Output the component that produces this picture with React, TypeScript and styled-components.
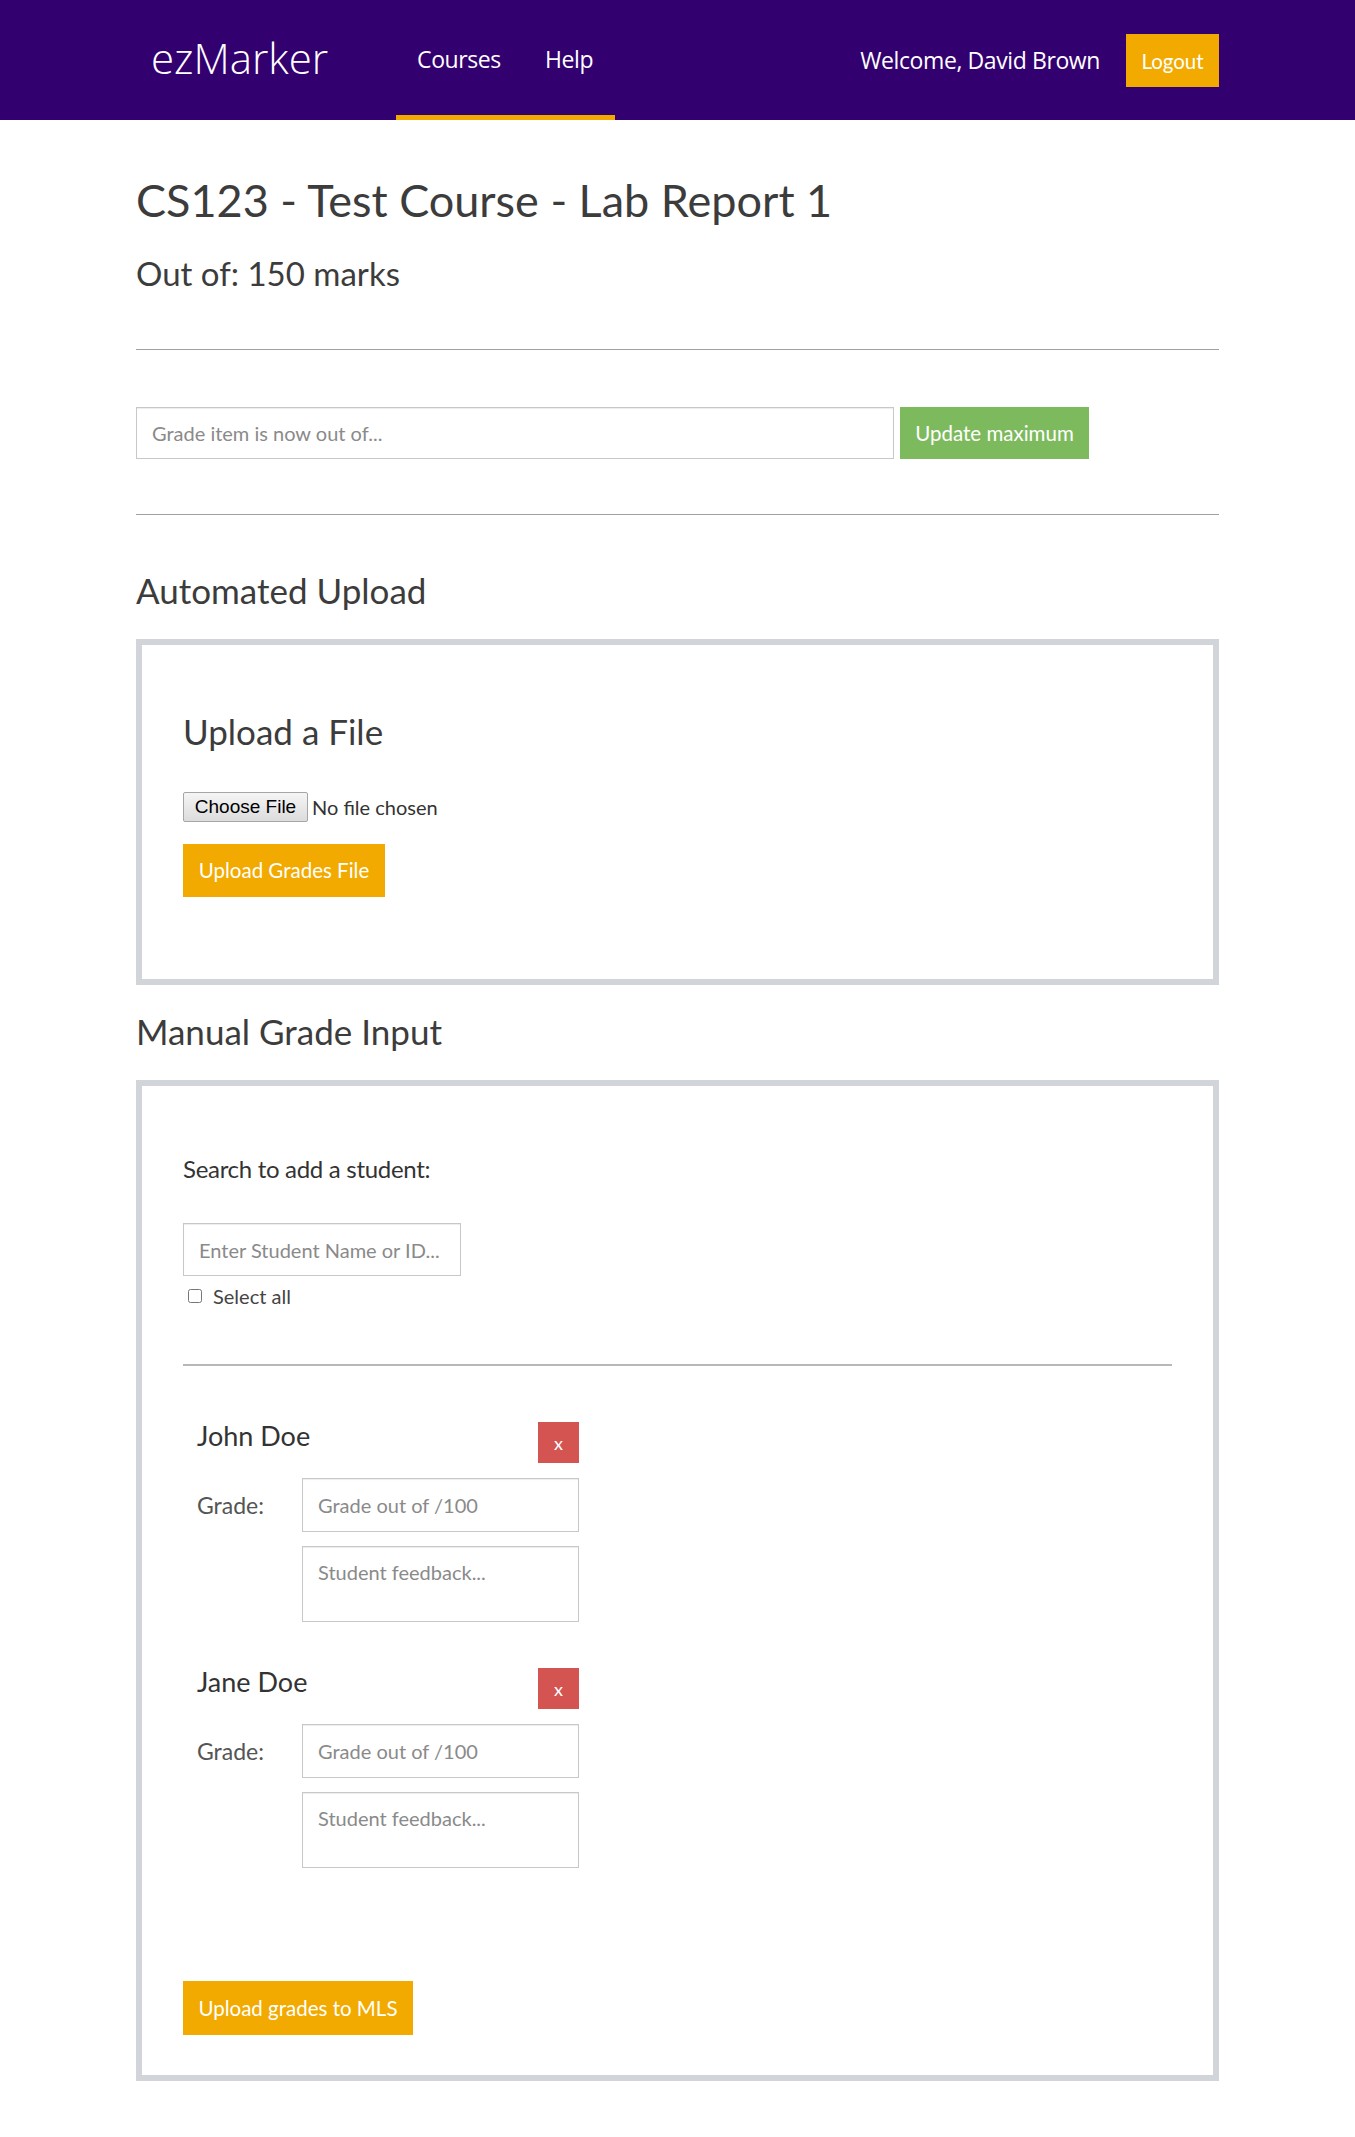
import React from "react";
import styled, { createGlobalStyle } from "styled-components";

const GlobalStyle = createGlobalStyle`
  html, body { margin: 0; padding: 0; background: #ffffff; }
  body {
    font-family: Lato, "Open Sans", Arial, sans-serif;
    color: #3f3f3f;
    font-size: 18px;
  }
  * { box-sizing: border-box; }
`;

const NavBar = styled.nav`
  background: #330070;
  height: 120px;
`;

const NavInner = styled.div`
  max-width: 1083px;
  height: 100%;
  margin: 0 auto;
  display: flex;
  align-items: stretch;
`;

const Brand = styled.a`
  display: flex;
  align-items: center;
  padding: 0 0 6px 15px;
  font-family: "Open Sans", Lato, sans-serif;
  font-weight: 300;
  font-size: 42px;
  color: #ffffff;
  text-decoration: none;
  margin-right: 68px;
`;

const NavList = styled.ul`
  list-style: none;
  margin: 0;
  padding: 2px 22px 0 21px;
  display: flex;
  align-items: center;
  gap: 44px;
  border-bottom: 5px solid #f2aa00;
`;

const NavItem = styled.li`
  font-family: "Open Sans", Lato, sans-serif;
  font-size: 23px;
  color: #ffffff;
  letter-spacing: -0.4px;
`;

const NavRight = styled.div`
  margin-left: auto;
  display: flex;
  align-items: center;
  gap: 26px;
`;

const Welcome = styled.span`
  font-family: "Open Sans", Lato, sans-serif;
  font-size: 23px;
  letter-spacing: -0.4px;
  color: #ffffff;
  margin-bottom: 1px;
`;

const Button = styled.button<{ $tone: "orange" | "green" | "red" }>`
  border: none;
  border-radius: 0;
  font-family: Lato, sans-serif;
  font-size: 20.5px;
  color: #ffffff;
  cursor: pointer;
  padding: 0 16px;
  background: ${(p) =>
    p.$tone === "orange" ? "#f2aa00" : p.$tone === "green" ? "#7dba5d" : "#d35450"};
`;

const LogoutButton = styled(Button)`
  width: 93px;
  height: 53px;
  padding: 0;
  margin-top: 1px;
`;

const Main = styled.main`
  max-width: 1083px;
  margin: 0 auto;
  padding: 53px 0 54px;
`;

const Title = styled.h1`
  margin: 0;
  font-size: 45px;
  font-weight: 400;
  line-height: 1.2;
  color: #3c3c3c;
`;

const SubTitle = styled.h3`
  margin: 27px 0 0;
  font-size: 33px;
  font-weight: 400;
  line-height: 1.2;
  color: #3c3c3c;
`;

const Rule = styled.hr<{ $top: number }>`
  margin: ${(p) => p.$top}px 0 0;
  border: none;
  border-top: 1px solid #a0a0a0;
  height: 0;
`;

const MaxRow = styled.div`
  margin-top: 57px;
  display: flex;
  gap: 6px;
  height: 52px;
`;

const TextInput = styled.input`
  height: 52px;
  border: 1px solid #c8c8c8;
  border-radius: 0;
  box-shadow: inset 0 1px 1px rgba(0, 0, 0, 0.075);
  padding: 0 15px;
  font-family: Lato, sans-serif;
  font-size: 20px;
  color: #333;
  outline: none;
  &::placeholder { color: #8a8a8a; }
`;

const MaxInput = styled(TextInput)`
  width: 758px;
  height: 52px;
`;

const UpdateButton = styled(Button)`
  width: 189px;
  height: 52px;
  padding: 0;
`;

const SectionTitle = styled.h2<{ $top: number }>`
  margin: ${(p) => p.$top}px 0 0;
  font-size: 35px;
  font-weight: 400;
  line-height: 1.2;
  color: #3c3c3c;
`;

const Panel = styled.section<{ $pt: number; $pb: number }>`
  margin-top: 28px;
  border: 6px solid #d1d5da;
  padding: ${(p) => p.$pt}px 41px ${(p) => p.$pb}px;
  display: flex;
  flex-direction: column;
  align-items: flex-start;
`;

const PanelTitle = styled.h3`
  margin: 0;
  font-size: 35px;
  font-weight: 400;
  line-height: 1.2;
  color: #3c3c3c;
`;

const FileRow = styled.div`
  margin-top: 40px;
  display: flex;
  align-items: center;
  gap: 4px;
`;

const ChooseButton = styled.button`
  height: 30px;
  width: 125px;
  padding: 0;
  border: 1px solid #a6a6a6;
  border-radius: 2px;
  background: linear-gradient(#f5f5f5, #dcdcdc);
  font-family: "Liberation Sans", Arial, sans-serif;
  font-size: 19px;
  color: #000;
`;

const FileStatus = styled.span`
  font-size: 20px;
  color: #333;
`;

const UploadFileButton = styled(Button)`
  margin-top: 22px;
  width: 202px;
  height: 53px;
  padding: 0;
`;

const SearchLabel = styled.p`
  margin: 0;
  font-size: 24px;
  line-height: 1.2;
  color: #333;
  letter-spacing: -0.3px;
`;

const SearchInput = styled(TextInput)`
  margin-top: 40px;
  width: 278px;
  height: 53px;
  padding-left: 15px;
`;

const CheckRow = styled.label`
  margin-top: 8px;
  margin-left: 5px;
  display: flex;
  align-items: center;
  gap: 11px;
  font-size: 20px;
  color: #444;
`;

const Check = styled.input`
  margin: 0;
  width: 14px;
  height: 14px;
`;

const InnerRule = styled.hr`
  align-self: stretch;
  margin: 56px 0 0;
  border: none;
  border-top: 2px solid #b8b8b8;
  height: 0;
`;

const StudentList = styled.div`
  margin-top: 56px;
  margin-left: 14px;
  display: flex;
  flex-direction: column;
  gap: 46px;
`;

const StudentCard = styled.div`
  width: 382px;
  display: flex;
  flex-direction: column;
`;

const StudentHeader = styled.div`
  display: flex;
  justify-content: space-between;
  align-items: flex-start;
`;

const StudentName = styled.h4`
  margin: -2px 0 0;
  font-size: 27px;
  font-weight: 400;
  line-height: 1.2;
  color: #333;
`;

const RemoveButton = styled(Button)`
  width: 41px;
  height: 41px;
  padding: 0;
  font-size: 18px;
`;

const GradeRow = styled.div`
  margin-top: 15px;
  display: flex;
  align-items: center;
  justify-content: space-between;
`;

const GradeLabel = styled.label`
  font-size: 23px;
  color: #555;
`;

const GradeInput = styled(TextInput)`
  width: 277px;
  height: 54px;
`;

const Feedback = styled.textarea`
  margin-top: 14px;
  margin-left: auto;
  width: 277px;
  height: 76px;
  border: 1px solid #c8c8c8;
  border-radius: 0;
  box-shadow: inset 0 1px 1px rgba(0, 0, 0, 0.075);
  padding: 13px 15px;
  font-family: Lato, sans-serif;
  font-size: 20px;
  resize: none;
  outline: none;
  &::placeholder { color: #8a8a8a; }
`;

const MlsButton = styled(Button)`
  margin-top: 113px;
  width: 230px;
  height: 54px;
  padding: 0;
`;

const students = ["John Doe", "Jane Doe"];

export default function App() {
  return (
    <>
      <GlobalStyle />
      <NavBar>
        <NavInner>
          <Brand href="#">ezMarker</Brand>
          <NavList>
            <NavItem>Courses</NavItem>
            <NavItem>Help</NavItem>
          </NavList>
          <NavRight>
            <Welcome>Welcome, David Brown</Welcome>
            <LogoutButton $tone="orange">Logout</LogoutButton>
          </NavRight>
        </NavInner>
      </NavBar>
      <Main>
        <Title>CS123 - Test Course - Lab Report 1</Title>
        <SubTitle>Out of: 150 marks</SubTitle>
        <Rule $top={55} />
        <MaxRow>
          <MaxInput placeholder="Grade item is now out of..." />
          <UpdateButton $tone="green">Update maximum</UpdateButton>
        </MaxRow>
        <Rule $top={55} />
        <SectionTitle $top={54}>Automated Upload</SectionTitle>
        <Panel $pt={65} $pb={82}>
          <PanelTitle>Upload a File</PanelTitle>
          <FileRow>
            <ChooseButton type="button">Choose File</ChooseButton>
            <FileStatus>No file chosen</FileStatus>
          </FileRow>
          <UploadFileButton $tone="orange">Upload Grades File</UploadFileButton>
        </Panel>
        <SectionTitle $top={25}>Manual Grade Input</SectionTitle>
        <Panel $pt={69} $pb={40}>
          <SearchLabel>Search to add a student:</SearchLabel>
          <SearchInput placeholder="Enter Student Name or ID..." />
          <CheckRow>
            <Check type="checkbox" />
            Select all
          </CheckRow>
          <InnerRule />
          <StudentList>
            {students.map((name) => (
              <StudentCard key={name}>
                <StudentHeader>
                  <StudentName>{name}</StudentName>
                  <RemoveButton $tone="red">x</RemoveButton>
                </StudentHeader>
                <GradeRow>
                  <GradeLabel>Grade:</GradeLabel>
                  <GradeInput placeholder="Grade out of /100" />
                </GradeRow>
                <Feedback placeholder="Student feedback..." />
              </StudentCard>
            ))}
          </StudentList>
          <MlsButton $tone="orange">Upload grades to MLS</MlsButton>
        </Panel>
      </Main>
    </>
  );
}
